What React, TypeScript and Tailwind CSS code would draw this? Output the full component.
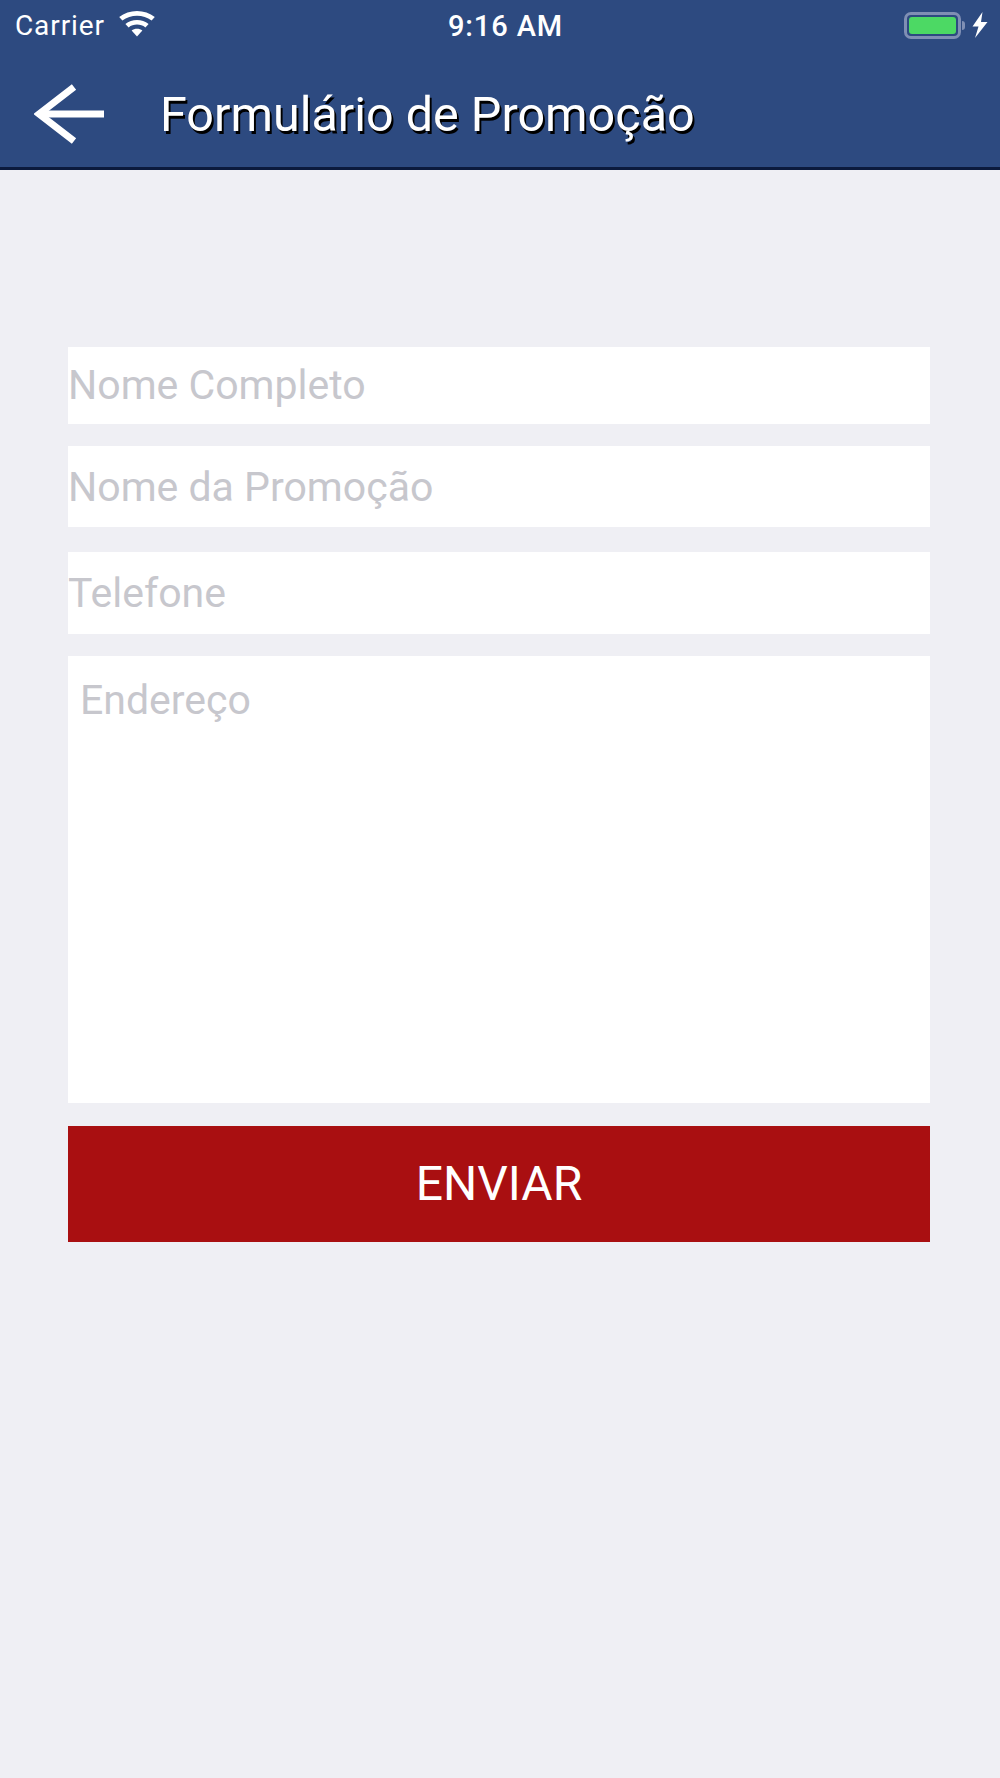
const fieldClass =
  "flex w-full items-center bg-white text-[41px] leading-none text-[#c7c7cd]";

function WifiIcon() {
  return (
    <svg width="36" height="26" viewBox="0 0 36 26" fill="#ffffff" className="mt-[-2px]">
      <path d="M18 25.5 L12.6 19.6 C15.6 17 20.4 17 23.4 19.6 Z" />
      <path d="M9.6 16.4 L6.4 12.9 C12.8 7.6 23.2 7.6 29.6 12.9 L26.4 16.4 C21.6 12.6 14.4 12.6 9.6 16.4 Z" />
      <path d="M3.4 9.6 L0.2 6.1 C10 -2 26 -2 35.8 6.1 L32.6 9.6 C24.4 3 11.6 3 3.4 9.6 Z" />
    </svg>
  );
}

function StatusBar() {
  return (
    <div className="relative flex h-[50px] items-center justify-between pl-[15px] pr-[12px] text-white">
      <div className="flex items-center gap-[14px]">
        <span className="pt-[2px] text-[28px] leading-none tracking-[0.9px]">Carrier</span>
        <WifiIcon />
      </div>
      <span className="absolute left-0 right-0 top-[12px] pl-[11px] text-center text-[29px] font-medium leading-none tracking-[0.9px]">
        9:16 AM
      </span>
      <div className="flex items-center">
        <div className="flex h-[27px] w-[57px] items-center rounded-[7px] border-[3px] border-[#7f8fb4] p-[2px]">
          <div className="h-full w-full rounded-[3px] bg-[#4cd964]" />
        </div>
        <div className="ml-[1px] h-[9px] w-[3px] rounded-r-full bg-[#7f8fb4]" />
        <svg width="16" height="26" viewBox="0 0 16 26" fill="#ffffff" className="ml-[7px]">
          <path d="M10.5 0 L0.5 14.5 H6.5 L3 26 L15.5 10 H9 Z" />
        </svg>
      </div>
    </div>
  );
}

function Header() {
  return (
    <header className="h-[170px] border-b-[3px] border-[#0b1a3d] bg-[#2d4a80]">
      <StatusBar />
      <div className="flex h-[117px] items-center pl-[34px] pt-[11px]">
        <svg width="72" height="60" viewBox="0 0 72 60" fill="none" stroke="#ffffff" strokeWidth="7">
          <path d="M70 30 H5" />
          <path d="M40 3 L5 30 L40 57" />
        </svg>
        <h1 className="ml-[54px] pt-[2px] text-[48.5px] leading-none text-white [text-shadow:2px_3px_0_#000000]">
          Formulário de Promoção
        </h1>
      </div>
    </header>
  );
}

export default function App() {
  return (
    <div className="h-[1778px] w-full bg-[#efeff4] font-['Roboto',sans-serif]">
      <Header />
      <form className="flex flex-col pl-[68px] pr-[70px] pt-[177px]">
        <div className={`${fieldClass} h-[77px]`}>
          <span>Nome Completo</span>
        </div>
        <div className={`${fieldClass} mt-[22px] h-[81px]`}>
          <span className="pt-[1px]">Nome da Promoção</span>
        </div>
        <div className={`${fieldClass} mt-[25px] h-[82px]`}>
          <span>Telefone</span>
        </div>
        <div className={`${fieldClass} mt-[22px] h-[447px] !items-start pl-[12px] pt-[24px]`}>
          <span>Endereço</span>
        </div>
        <button
          type="button"
          className="mt-[23px] h-[116px] w-full bg-[#a90f11] text-[48px] leading-none text-white"
        >
          ENVIAR
        </button>
      </form>
    </div>
  );
}
